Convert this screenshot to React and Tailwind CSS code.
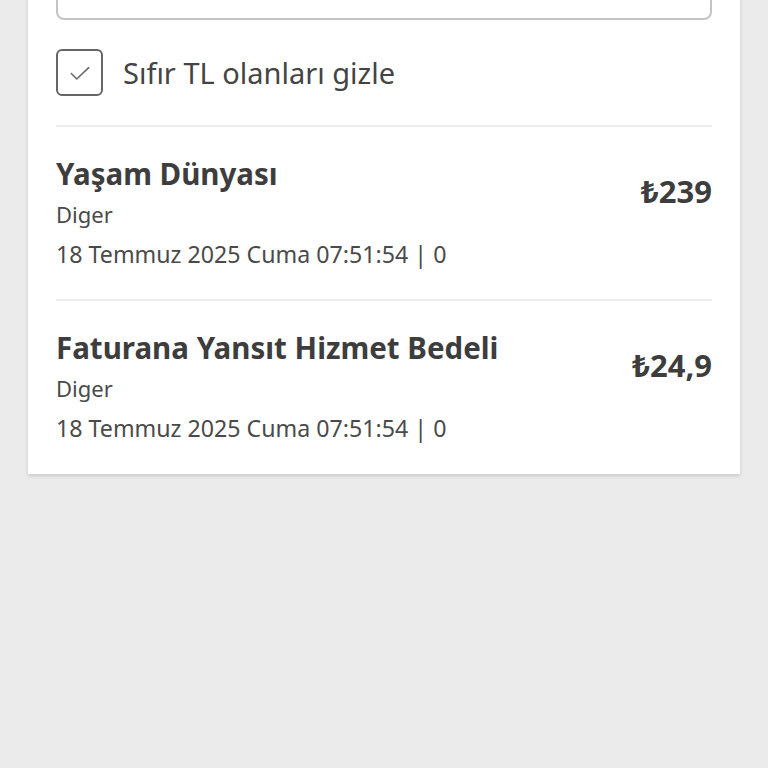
import React from "react";

const items = [
  { title: "Yaşam Dünyası", category: "Diger", date: "18 Temmuz 2025 Cuma 07:51:54 | 0", price: "₺239" },
  { title: "Faturana Yansıt Hizmet Bedeli", category: "Diger", date: "18 Temmuz 2025 Cuma 07:51:54 | 0", price: "₺24,9" },
];

export default function App() {
  return (
    <div
      className="min-h-[768px] w-[768px] bg-[#ebebeb] overflow-hidden"
      style={{ fontFamily: '"Noto Sans", sans-serif' }}
    >
      <div className="mx-[28px] -mt-[40px] bg-white px-[28px] pb-[1px] shadow-[0_2px_4px_rgba(0,0,0,0.15)]">
        {/* search input (scrolled off) */}
        <div className="h-[60px] rounded-[8px] border-2 border-[#c4c4c4]" />

        {/* hide zero */}
        <label className="flex items-center gap-[20px] py-[29px] border-b-2 border-[#ececec]">
          <span className="flex h-[47px] w-[47px] items-center justify-center rounded-[6px] border-2 border-[#666]">
            <svg width="26" height="26" viewBox="0 0 24 24" fill="none" stroke="#666" strokeWidth="1.4" strokeLinecap="round" strokeLinejoin="round">
              <path d="M4 12.5l5 5L20 7" />
            </svg>
          </span>
          <span className="text-[29px] text-[#444] leading-none">Sıfır TL olanları gizle</span>
        </label>

        {/* transactions */}
        {items.map((it, i) => (
          <div
            key={i}
            className={`flex items-center justify-between pt-[27px] pb-[26px] ${i === 0 ? "border-b-2 border-[#ececec]" : ""}`}
          >
            <div className="flex flex-col">
              <span className="text-[29.5px] font-bold text-[#3d3d3d] leading-[40px]">{it.title}</span>
              <span className="text-[22px] text-[#4a4a4a] leading-[41px]">{it.category}</span>
              <span className="text-[23.2px] text-[#4a4a4a] leading-[38px]">{it.date}</span>
            </div>
            <span className="text-[31px] font-bold text-[#3d3d3d] -mt-[44px]">{it.price}</span>
          </div>
        ))}
      </div>
    </div>
  );
}
